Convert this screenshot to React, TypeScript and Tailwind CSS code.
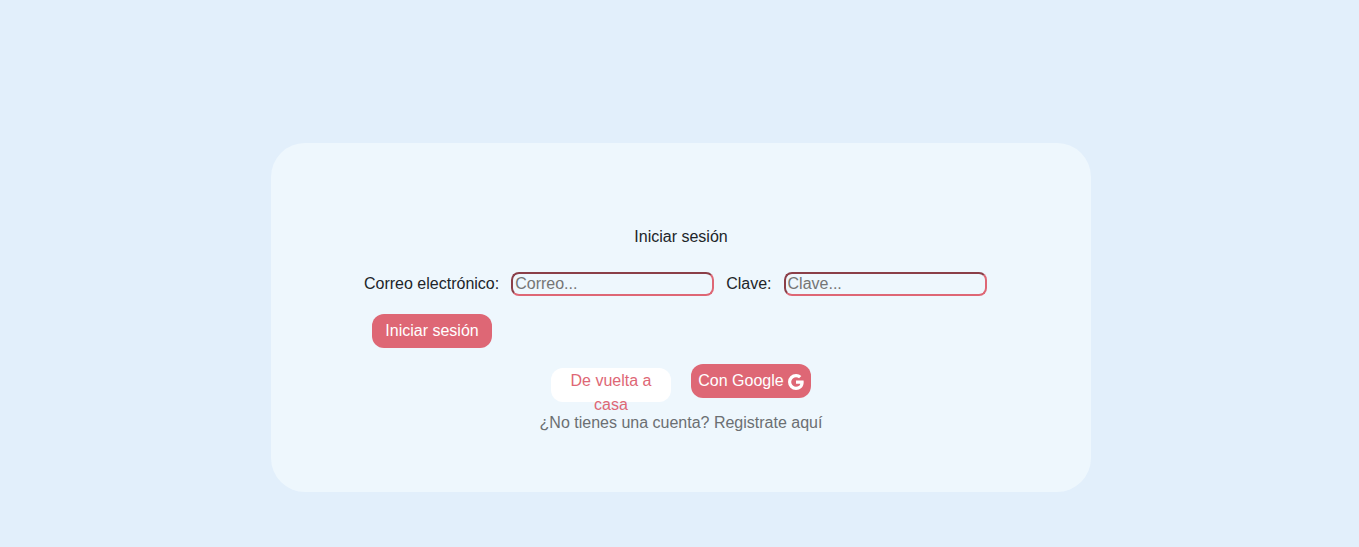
import { BsGoogle } from "react-icons/bs";

const field =
  "h-6 w-[203px] rounded-lg border-2 border-t-[#8b3f48] border-r-[#de6775] border-b-[#de6775] border-l-[#8b3f48] bg-transparent px-0.5 leading-5 text-[#212529] placeholder:text-[#757575]";

export default function App() {
  return (
    <main className="min-h-screen bg-[#e2effb] pt-[143px] pb-14 pl-[3px] font-['Liberation_Sans',Arial,sans-serif] text-base leading-6 text-[#212529]">
      <section className="mx-auto flex w-full max-w-[820px] flex-col rounded-[34px] bg-[#eef7fd] px-[93px] pt-[82px] pb-[57px]">
        <h1 className="text-center">Iniciar sesión</h1>
        <form className="mt-[23px]">
          <div className="flex flex-wrap items-center gap-3">
            <label htmlFor="email">Correo electrónico:</label>
            <input id="email" type="email" placeholder="Correo..." className={field} />
            <label htmlFor="password">Clave:</label>
            <input id="password" type="password" placeholder="Clave..." className={field} />
          </div>
          <button
            type="submit"
            className="mt-[18px] ml-2 block h-[34px] w-[120px] rounded-xl bg-[#de6775] text-white"
          >
            Iniciar sesión
          </button>
        </form>
        <div className="mt-4 flex items-start justify-center gap-5">
          <a
            href="#inicio"
            className="mt-1 block h-[34px] w-[120px] rounded-xl bg-white px-1.5 pt-px text-center text-[#de6775]"
          >
            De vuelta a casa
          </a>
          <button
            type="button"
            className="flex h-[34px] w-[120px] items-center justify-center gap-1 rounded-xl bg-[#de6775] whitespace-nowrap text-white"
          >
            Con Google
            <BsGoogle className="mt-0.5 size-4 shrink-0" aria-hidden="true" />
          </button>
        </div>
        <p className="mt-[9px] text-center">
          <a href="#registro" className="text-[#6b6f72]">
            ¿No tienes una cuenta? Registrate aquí
          </a>
        </p>
      </section>
    </main>
  );
}
